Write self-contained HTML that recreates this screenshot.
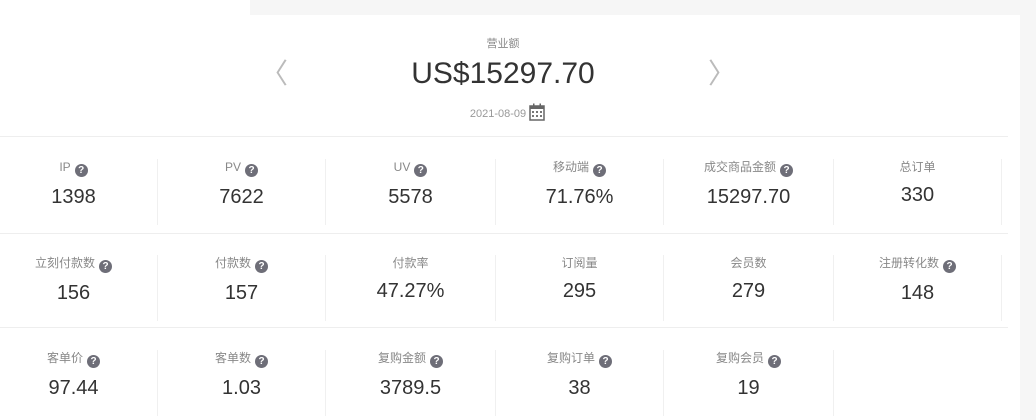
<!DOCTYPE html>
<html><head><meta charset="utf-8"><style>
*{margin:0;padding:0;box-sizing:border-box}
body{width:1036px;height:420px;background:#fff;position:relative;overflow:hidden;font-family:"Liberation Sans","Noto Sans CJK SC",sans-serif;color:#333}
.band{position:absolute;left:250px;top:0;width:786px;height:15px;background:#f6f6f6}
.rs{position:absolute;left:1020px;top:15px;width:16px;height:405px;background:#f6f6f6}
.hl{position:absolute;left:0;width:1008px;height:1px;background:#eee}
.t{position:absolute;width:100%;text-align:center}
.cell{position:absolute;width:168px;height:66px;text-align:center}
.cell.b{border-right:1px solid #f0f0f0}
.lab{font-size:12px;color:#888;height:16px;line-height:16px}
.q{display:inline-block;width:13px;height:13px;border-radius:50%;background:#6e6e78;color:#fff;font-size:10px;line-height:13px;font-weight:bold;vertical-align:-2px;margin-left:4px}
.val{font-size:20px;color:#333;margin-top:11px}
.arr{position:absolute;top:52px;font-size:28px;color:#bbb;font-family:"DejaVu Sans",sans-serif}
</style></head><body>
<div class="band"></div><div class="rs"></div>
<div class="t" style="left:-15px;top:35px;font-size:11px;color:#888">营业额</div>
<div class="t" style="left:-15px;top:57px;font-size:30px;color:#333">US$15297.70</div>
<div class="t" style="left:-20px;top:108px;font-size:11px;color:#999">2021-08-09</div>
<svg style="position:absolute;left:529px;top:103px" width="16" height="18" viewBox="0 0 16 18"><rect x="1" y="3" width="14" height="14" fill="none" stroke="#666" stroke-width="1.5"/><rect x="1" y="3" width="14" height="3" fill="#666"/><rect x="4" y="0.5" width="1.5" height="4" fill="#666"/><rect x="10.5" y="0.5" width="1.5" height="4" fill="#666"/><g fill="#777"><rect x="3" y="8" width="2" height="2"/><rect x="7" y="8" width="2" height="2"/><rect x="11" y="8" width="2" height="2"/><rect x="3" y="12" width="2" height="2"/><rect x="7" y="12" width="2" height="2"/><rect x="11" y="12" width="2" height="2"/></g></svg>
<div class="arr" style="left:260px">〈</div>
<div class="arr" style="left:708px">〉</div>
<div class="hl" style="top:136px"></div>
<div class="hl" style="top:233px"></div>
<div class="hl" style="top:327px"></div>

<div class="cell b" style="left:-10px;top:159px;width:168px"><div class="lab">IP<span class="q">?</span></div><div class="val">1398</div></div>
<div class="cell b" style="left:158px;top:159px"><div class="lab">PV<span class="q">?</span></div><div class="val">7622</div></div>
<div class="cell b" style="left:326px;top:159px;width:170px"><div class="lab">UV<span class="q">?</span></div><div class="val">5578</div></div>
<div class="cell b" style="left:496px;top:159px"><div class="lab">移动端<span class="q">?</span></div><div class="val">71.76%</div></div>
<div class="cell b" style="left:664px;top:159px;width:170px"><div class="lab">成交商品金额<span class="q">?</span></div><div class="val">15297.70</div></div>
<div class="cell b" style="left:834px;top:159px"><div class="lab">总订单</div><div class="val" style="margin-top:9px">330</div></div>

<div class="cell b" style="left:-10px;top:255px;width:168px"><div class="lab">立刻付款数<span class="q">?</span></div><div class="val">156</div></div>
<div class="cell b" style="left:158px;top:255px"><div class="lab">付款数<span class="q">?</span></div><div class="val">157</div></div>
<div class="cell b" style="left:326px;top:255px;width:170px"><div class="lab">付款率</div><div class="val" style="margin-top:9px">47.27%</div></div>
<div class="cell b" style="left:496px;top:255px"><div class="lab">订阅量</div><div class="val" style="margin-top:9px">295</div></div>
<div class="cell b" style="left:664px;top:255px;width:170px"><div class="lab">会员数</div><div class="val" style="margin-top:9px">279</div></div>
<div class="cell b" style="left:834px;top:255px"><div class="lab">注册转化数<span class="q">?</span></div><div class="val">148</div></div>

<div class="cell b" style="left:-10px;top:350px;width:168px"><div class="lab">客单价<span class="q">?</span></div><div class="val">97.44</div></div>
<div class="cell b" style="left:158px;top:350px"><div class="lab">客单数<span class="q">?</span></div><div class="val">1.03</div></div>
<div class="cell b" style="left:326px;top:350px;width:170px"><div class="lab">复购金额<span class="q">?</span></div><div class="val">3789.5</div></div>
<div class="cell b" style="left:496px;top:350px"><div class="lab">复购订单<span class="q">?</span></div><div class="val">38</div></div>
<div class="cell b" style="left:664px;top:350px;width:170px"><div class="lab">复购会员<span class="q">?</span></div><div class="val">19</div></div>
</body></html>
